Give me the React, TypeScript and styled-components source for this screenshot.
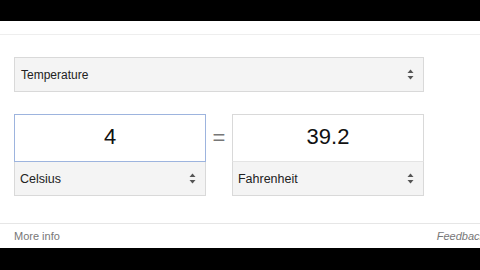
import React from 'react';
import styled, { createGlobalStyle } from 'styled-components';

const GlobalStyle = createGlobalStyle`
  html, body {
    margin: 0;
    padding: 0;
    background: #fff;
    font-family: Arial, "Liberation Sans", sans-serif;
  }
`;

function SpinArrows() {
  return (
    <svg width="7" height="11" viewBox="0 0 7 11">
      <path d="M3.5 0.5 L6.5 4 L0.5 4 Z" fill="#555" />
      <path d="M3.5 10.5 L6.5 7 L0.5 7 Z" fill="#555" />
    </svg>
  );
}

function UnitBox({ value, unit, focused }: { value: string; unit: string; focused?: boolean }) {
  return (
    <Box>
      <ValueField $focused={focused}>{value}</ValueField>
      <UnitSelect>
        <span>{unit}</span>
        <SpinArrows />
      </UnitSelect>
    </Box>
  );
}

export default function App() {
  return (
    <>
      <GlobalStyle />
      <Page>
        <Letterbox $h={21} />
        <Card>
          <Content>
            <KindSelect>
              <span>Temperature</span>
              <SpinArrows />
            </KindSelect>
            <Converter>
              <UnitBox value="4" unit="Celsius" focused />
              <Equals>=</Equals>
              <UnitBox value="39.2" unit="Fahrenheit" />
            </Converter>
          </Content>
          <Footer>
            <FooterLink>More info</FooterLink>
            <Feedback>Feedback</Feedback>
          </Footer>
        </Card>
        <Letterbox $h={22} />
      </Page>
    </>
  );
}

const Page = styled.div`
  width: 480px;
  height: 270px;
  display: flex;
  flex-direction: column;
  overflow: hidden;
`;

const Letterbox = styled.div<{ $h: number }>`
  height: ${({ $h }) => $h}px;
  background: #000;
  flex-shrink: 0;
`;

const Card = styled.div`
  flex: 1;
  margin-top: 13px;
  border-top: 1px solid #eeeeee;
  display: flex;
  flex-direction: column;
`;

const Content = styled.div`
  padding: 22px 56px 0 14px;
  display: flex;
  flex-direction: column;
  gap: 22px;
  flex: 1;
`;

const SelectBase = styled.div`
  display: flex;
  align-items: center;
  justify-content: space-between;
  background: #f4f4f4;
  color: #222;
  font-size: 12px;
  box-sizing: border-box;
`;

const KindSelect = styled(SelectBase)`
  height: 35px;
  border: 1px solid #d9d9d9;
  padding: 0 9px 0 6px;
`;

const Converter = styled.div`
  display: flex;
  align-items: flex-start;
`;

const Box = styled.div`
  width: 193px;
  display: flex;
  flex-direction: column;
  box-sizing: border-box;
`;

const ValueField = styled.div<{ $focused?: boolean }>`
  height: 48px;
  box-sizing: border-box;
  border: 1px solid ${({ $focused }) => ($focused ? '#9db4de' : '#d9d9d9')};
  border-bottom: 1px solid ${({ $focused }) => ($focused ? '#9db4de' : '#e4e4e4')};
  background: #fff;
  display: flex;
  align-items: center;
  justify-content: center;
  font-size: 22px;
  color: #111;
  padding-bottom: 2px;
`;

const UnitSelect = styled(SelectBase)`
  height: 34px;
  border: 1px solid #d9d9d9;
  border-top: none;
  padding: 0 9px 0 5px;
  font-size: 12.5px;
`;

const Equals = styled.div`
  width: 26px;
  text-align: center;
  font-size: 22px;
  color: #777;
  line-height: 48px;
`;

const Footer = styled.div`
  height: 24px;
  border-top: 1px solid #e6e6e6;
  display: flex;
  align-items: center;
  justify-content: space-between;
  padding: 0 0 0 14px;
  font-size: 11px;
  color: #777;
  overflow: hidden;
  white-space: nowrap;
`;

const FooterLink = styled.span``;

const Feedback = styled.span`
  font-style: italic;
  margin-right: -5px;
`;
